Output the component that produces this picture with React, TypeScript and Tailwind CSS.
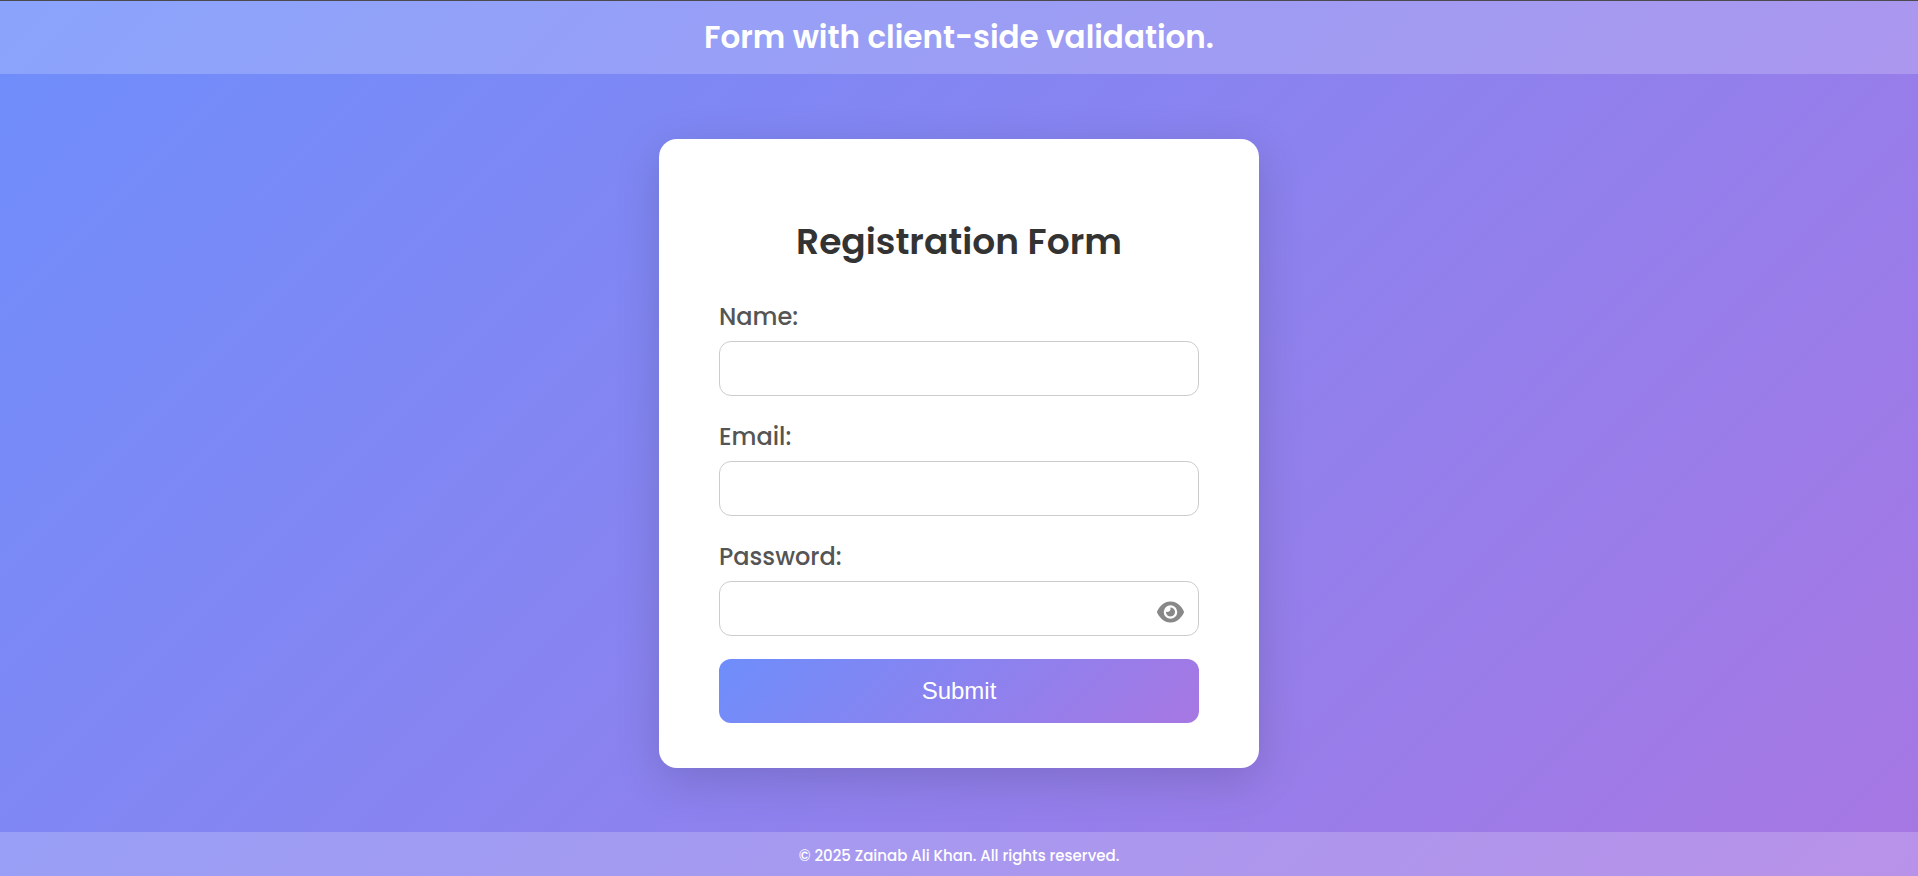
import { useState } from "react";
import { FaEye, FaEyeSlash } from "react-icons/fa6";

const labelClass = "text-2xl leading-9 font-medium text-[#555]";
const inputClass =
  "h-[55px] w-full rounded-xl border border-[#ccc] bg-white px-4 text-2xl text-[#333] outline-none focus:border-[#6e8efb]";

export default function App() {
  const [visible, setVisible] = useState(false);

  return (
    <div className="flex min-h-screen flex-col border-t border-[#4a4a4f] bg-[linear-gradient(135deg,#6e8efb,#a777e3)] font-['Poppins','Inter',sans-serif]">
      <header className="bg-white/20 px-4 pt-3 pb-[13px] text-center text-white">
        <h1 className="text-[31px] leading-[48px] font-semibold">Form with client-side validation.</h1>
      </header>

      <main className="flex flex-1 items-center justify-center px-4 py-8">
        <section className="w-full max-w-[600px] rounded-[18px] bg-white px-[60px] pt-[76px] pb-[45px] shadow-[0_12px_45px_rgba(0,0,0,0.15)]">
          <h2 className="mb-[30px] text-center text-4xl leading-[54px] font-semibold text-[#333]">Registration Form</h2>
          <form className="flex flex-col gap-[23px]" onSubmit={(event) => event.preventDefault()}>
            <div className="flex flex-col gap-1.5">
              <label htmlFor="name" className={labelClass}>Name:</label>
              <input id="name" name="name" type="text" className={inputClass} />
            </div>
            <div className="flex flex-col gap-1.5">
              <label htmlFor="email" className={labelClass}>Email:</label>
              <input id="email" name="email" type="email" className={inputClass} />
            </div>
            <div className="flex flex-col gap-1.5">
              <label htmlFor="password" className={labelClass}>Password:</label>
              <div className="relative">
                <input id="password" name="password" type={visible ? "text" : "password"} className={inputClass} />
                <button
                  type="button"
                  aria-label={visible ? "Hide password" : "Show password"}
                  onClick={() => setVisible(!visible)}
                  className="absolute inset-y-0 right-[15px] flex items-center pt-2 text-2xl text-[#888]"
                >
                  {visible ? <FaEyeSlash className="h-6 w-[27px]" /> : <FaEye className="h-6 w-[27px]" />}
                </button>
              </div>
            </div>
            <button
              type="submit"
              className="h-16 w-full rounded-xl bg-[linear-gradient(135deg,#6e8efb,#a777e3)] font-['Liberation_Sans',Arial,sans-serif] text-2xl text-white"
            >
              Submit
            </button>
          </form>
        </section>
      </main>

      <footer className="bg-white/20 px-4 pt-3 pb-2 text-center text-white">
        <p className="text-[15px] leading-6 font-medium">© 2025 Zainab Ali Khan. All rights reserved.</p>
      </footer>
    </div>
  );
}
